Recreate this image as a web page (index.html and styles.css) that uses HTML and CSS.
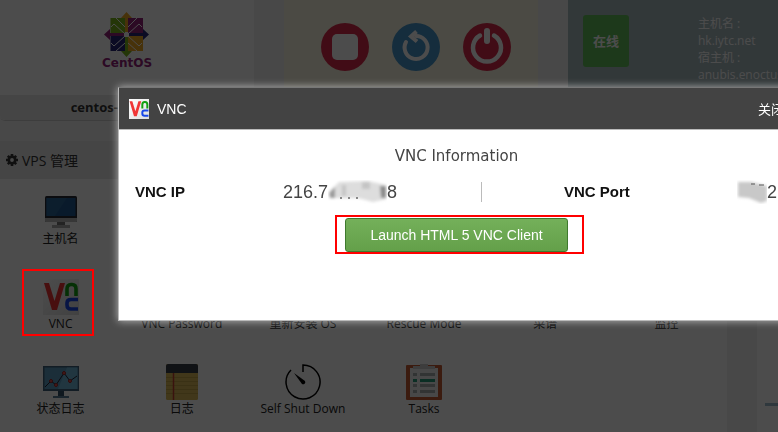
FILE: index.html
```html
<!DOCTYPE html>
<html lang="zh-CN">
<head>
    <meta charset="UTF-8">
    <meta name="viewport" content="width=device-width, initial-scale=1.0">
    <title>VNC</title>
    <link rel="stylesheet" href="styles.css">
</head>
<body>

    <!-- Shared VNC logo -->
    <svg class="symbols" aria-hidden="true">
        <defs>
            <linearGradient id="paper" x1="0" y1="0" x2="1" y2="1">
                <stop offset="0" stop-color="#fff"/>
                <stop offset="1" stop-color="#dcdcdc"/>
            </linearGradient>
        </defs>
        <symbol id="vncLogo" viewBox="0 0 36 36">
            <rect width="36" height="36" fill="url(#paper)"/>
            <path d="M1 4H6L11.500 22L17 4H22L14 31H9z" fill="#f03535"/>
            <path d="M24 17V10Q24 5.500 28 5.500H29Q33 5.500 33 10V17" fill="none" stroke="#12a012" stroke-width="3.600"/>
            <path d="M35 20.500H28Q24 20.500 24 24V26Q24 30 28 30H35" fill="none" stroke="#1848e8" stroke-width="3.600"/>
        </symbol>
    </svg>

    <div class="page">
        <div class="top-row">
            <div class="card os-card">
                <div class="os-logo">
                    <svg width="60" height="58" viewBox="-5 0 60 58" role="img" aria-label="CentOS">
                        <path d="M8.500 6H23V22H8.500z" fill="#79b51c"/>
                        <path d="M26 6H41V22H26z" fill="#932279"/>
                        <path d="M8.500 24H23V39H8.500z" fill="#262577"/>
                        <path d="M26 24H41V39H26z" fill="#efa724"/>
                        <!-- folded squares: white outlines towards the middle -->
                        <path d="M9 15L12 12L23 22M14 6L23 15M40 15L37 12L26 22M35 6L26 15M9 31L12 34L23 24M14 39L23 31M40 31L37 34L26 24M35 39L26 31" fill="none" stroke="#fff" stroke-width="1"/>
                        <path d="M24.500 0L30 6H26V20H23V6H19z" fill="#efa724"/>
                        <path d="M47 22.500L41 17V21H27V24H41V28z" fill="#262577"/>
                        <path d="M24.500 45L30 39H26V25H23V39H19z" fill="#79b51c"/>
                        <path d="M2 22.500L8 17V21H22V24H8V28z" fill="#932279"/>
                        <circle cx="24.500" cy="22.500" r="2.500" fill="#fff"/>
                        <text x="25" y="55" class="os-word" text-anchor="middle">CentOS</text>
                    </svg>
                </div>
                <div class="os-name">centos-6.5-x86_64</div>
            </div>

            <div class="card power-card">
                <button type="button" aria-label="Stop">
                    <svg width="48" height="48" viewBox="0 0 48 48"><circle cx="24" cy="24" r="24" fill="#d92b4b"/><rect x="11" y="11" width="26" height="26" rx="5" fill="#fff"/></svg>
                </button>
                <button type="button" aria-label="Restart">
                    <svg width="48" height="48" viewBox="0 0 48 48"><circle cx="24" cy="24" r="24" fill="#4697cc"/><path d="M14 19A11.500 11.500 0 1 0 24 13" fill="none" stroke="#fff" stroke-width="4" stroke-linecap="round"/><path d="M24.500 8.500L19 13.500L25 18.500" fill="none" stroke="#fff" stroke-width="4"/></svg>
                </button>
                <button type="button" aria-label="Power">
                    <svg width="48" height="48" viewBox="0 0 48 48"><circle cx="24" cy="24" r="24" fill="#d92b4b"/><path d="M17 12.500A14 14 0 1 0 31 12.500" fill="none" stroke="#fff" stroke-width="4.500" stroke-linecap="round"/><path d="M24 8V18" stroke="#fff" stroke-width="6" stroke-linecap="round"/></svg>
                </button>
            </div>

            <div class="card status-card">
                <div class="status">在线</div>
                <div class="host-info">主机名 :<br>hk.iytc.net<br>宿主机 :<br>anubis.enoctus</div>
            </div>
        </div>

        <div class="bottom-row">
            <div class="panel">
                <div class="panel-title">
                    <svg width="12" height="12" viewBox="0 0 12 12"><path d="M6 0V12M0 6H12M1.800 1.800L10.200 10.200M10.200 1.800L1.800 10.200" stroke="#333" stroke-width="2.600"/><circle cx="6" cy="6" r="3.200" fill="#f0f0f0" stroke="#333" stroke-width="2.600"/></svg>
                    VPS 管理
                </div>
                <div class="tools">
                    <a href="#" class="tool">
                        <svg class="icon" viewBox="0 0 36 36">
                            <rect x="2" y="2" width="32" height="26" rx="1.500" fill="#252a33"/>
                            <path d="M3.500 4H32.500V22H3.500z" fill="#205890"/>
                            <path d="M3.500 4H24L12 22H3.500z" fill="#286598"/>
                            <path d="M2 24H34V27Q34 28 33 28H3Q2 28 2 27z" fill="#b8b8b8"/>
                            <path d="M14 28H22V31H14z" fill="#777"/>
                            <path d="M9 31H27V34H9z" fill="#aaa"/>
                        </svg>
                        主机名
                    </a>
                </div>
                <div class="tools">
                    <a href="#" class="tool"><svg class="icon"><use href="#vncLogo"/></svg>VNC</a>
                    <a href="#" class="tool"><span class="icon"></span>VNC Password</a>
                    <a href="#" class="tool"><span class="icon"></span>重新安装 OS</a>
                    <a href="#" class="tool"><span class="icon"></span>Rescue Mode</a>
                    <a href="#" class="tool"><span class="icon"></span>菜谱</a>
                    <a href="#" class="tool"><span class="icon"></span>监控</a>
                </div>
                <div class="tools">
                    <a href="#" class="tool">
                        <svg class="icon" viewBox="0 0 36 36">
                            <path d="M0 2H36V27H0z" fill="#3d5f78"/>
                            <path d="M1.500 3.500H34.500V25H1.500z" fill="#5a9cc0"/>
                            <path d="M24 3.500H34.500V25H15z" fill="#70b4d6"/>
                            <path d="M15 27H21V32H15z" fill="#34516a"/>
                            <path d="M10 32H26V34H10z" fill="#577c98"/>
                            <path d="M2 23L8 17L13 21L21 9L27 17L34 12" fill="none" stroke="#223" stroke-width="1"/>
                            <g fill="#e86060" stroke="#a02020" stroke-width="1"><circle cx="8" cy="17" r="1.500"/><circle cx="13" cy="21" r="1.500"/><circle cx="21" cy="9" r="1.500"/><circle cx="27" cy="17" r="1.500"/></g>
                        </svg>
                        状态日志
                    </a>
                    <a href="#" class="tool">
                        <svg class="icon" viewBox="0 0 36 36">
                            <rect x="2" y="0" width="32" height="36" rx="1.500" fill="#d9b957"/>
                            <path d="M2 9V2Q2 0 4 0H32Q34 0 34 2V9z" fill="#383d48"/>
                            <path d="M2 13.500H34M2 17.500H34M2 21.500H34M2 25.500H34M2 29.500H34" stroke="#c4a548"/>
                            <path d="M9.500 9V36" stroke="#c43c30" stroke-width="1.500"/>
                        </svg>
                        日志
                    </a>
                    <a href="#" class="tool">
                        <svg class="icon" viewBox="0 0 36 36">
                            <path d="M18 8V1A17 17 0 1 1 6 6" fill="none" stroke="#000" stroke-width="1.500"/>
                            <path d="M9 9L20 17A2.200 2.200 0 0 1 17 20z" fill="#000"/>
                        </svg>
                        Self Shut Down
                    </a>
                    <a href="#" class="tool">
                        <svg class="icon" viewBox="0 0 36 36">
                            <rect y="1" width="36" height="35" rx="1" fill="#c75a32"/>
                            <path d="M4 4H32V33H4z" fill="#f2f2f2"/>
                            <path d="M7 2H14V0H22V2H29V5H7z" fill="#ccc"/>
                            <path d="M7 10.500H11M14 10.500H29M7 21.500H11M14 21.500H29M7 27.500H11M14 27.500H29" stroke="#a8b0b0" stroke-width="3"/>
                            <path d="M7 16.500H11M14 16.500H29" stroke="#279b78" stroke-width="3"/>
                        </svg>
                        Tasks
                    </a>
                </div>
            </div>
            <div class="panel side-panel">
                <div class="usage-bar"></div>
            </div>
        </div>
    </div>

    <div class="overlay"></div>

    <div class="modal" role="dialog" aria-label="VNC">
        <div class="modal-header">
            <svg width="20" height="20"><use href="#vncLogo"/></svg>
            <span>VNC</span>
            <button type="button" class="close">关闭</button>
        </div>
        <div class="modal-body">
            <h2>VNC Information</h2>
            <dl class="vnc-info">
                <dt>VNC IP</dt>
                <dd>216.7<svg class="smudge" width="59" height="24" viewBox="0 0 59 24">
                    <filter id="soft" x="-20%" y="-20%" width="140%" height="140%"><feGaussianBlur stdDeviation="1.500"/></filter>
                    <g filter="url(#soft)">
                        <path d="M2 11L11 2L40 1L58 5V19L45 22L30 18L2 18z" fill="#ddd"/>
                        <path d="M1 13L7 7V18H2z" fill="#999"/>
                        <path d="M52 6H58V18H53z" fill="#888"/>
                        <path d="M34 2H42V9H34zM14 5H18V16H14z" fill="#c4c4c4"/>
                    </g>
                    <path d="M12 18H14M20 18H22M28 18H30" stroke="#666" stroke-width="1.500"/>
                </svg>8</dd>
                <dt class="port-label">VNC Port</dt>
                <dd class="port"><svg class="smudge" width="30" height="24" viewBox="0 0 30 24">
                    <path d="M1 2H14L30 6V21L24 23L12 18L1 17z" fill="#c8c8c8" filter="url(#soft)"/>
                    <path d="M14 4H18M22 5H27" stroke="#555" stroke-width="1"/>
                </svg>2</dd>
            </dl>
            <button type="button" class="launch">Launch HTML 5 VNC Client</button>
        </div>
    </div>

    <div class="mark mark-vnc"></div>
    <div class="mark mark-launch"></div>

</body>
</html>
```
FILE: styles.css
```css
* {
    box-sizing: border-box;
}
body {
    margin: 0;
    font-family: 'Open Sans', 'Noto Sans CJK SC', sans-serif;
    font-size: 12px;
    color: #333;
    background-color: #f2f2f2;
    overflow: hidden;
}
button {
    padding: 0;
    border: none;
    background: none;
    font-family: inherit;
    cursor: pointer;
}
.symbols {
    position: absolute;
    width: 0;
    height: 0;
}

/* The page is a little wider than the window */
.page {
    width: calc(100% + 44px);
}
.top-row {
    display: grid;
    grid-template-columns: repeat(3, 1fr);
    gap: 30px;
    height: 121px;
    margin-bottom: 20px;
}
.card {
    background-color: #fff;
    border-radius: 0 0 5px 5px;
}
.os-card {
    display: flex;
    flex-direction: column;
    overflow: hidden;
    border-bottom: 1px solid #ccc;
}
.os-logo {
    flex: 1;
    padding-top: 12px;
    text-align: center;
}
.os-word {
    font-family: 'DejaVu Sans', sans-serif;
    font-size: 12px;
    font-weight: bold;
    fill: #932279;
}
.os-name {
    background-color: #e8e8e8;
    font-size: 13px;
    font-weight: bold;
    line-height: 25px;
    text-align: center;
}
.power-card {
    display: flex;
    justify-content: center;
    gap: 23px;
    padding: 23px 0 0 10px;
    background-color: #fcf8e3;
}
.power-card button {
    height: 48px;
}
.status-card {
    display: grid;
    grid-template-columns: 46px 1fr;
    gap: 69px;
    align-items: start;
    padding: 15px;
    color: #fff;
    background-color: #a9bbc0;
}
.status {
    border-radius: 3px;
    background-color: #62c05a;
    font-size: 13px;
    font-weight: bold;
    line-height: 52px;
    text-align: center;
}
.host-info {
    line-height: 17px;
    color: #fff;
}

.bottom-row {
    display: grid;
    grid-template-columns: 727px 1fr;
    gap: 30px;
}
.panel {
    min-height: 291px;
    background-color: #fff;
}
.panel-title {
    display: flex;
    align-items: center;
    gap: 4px;
    height: 38px;
    padding-left: 6px;
    background-color: #e6e6e6;
    font-size: 14px;
}
.tools {
    display: grid;
    grid-template-columns: repeat(6, 1fr);
    height: 85px;
    padding-top: 15px;
}
.tool {
    display: flex;
    flex-direction: column;
    align-items: center;
    color: #222;
    line-height: 18px;
    text-decoration: none;
}
.icon {
    width: 36px;
    height: 36px;
}
.side-panel {
    padding: 262px 0 0 8px;
}
.usage-bar {
    height: 3px;
    background-color: #9dbccb;
}

.overlay {
    position: fixed;
    inset: 0;
    background-color: rgba(0, 0, 0, 0.7);
}

/* VNC dialog */
.modal {
    position: fixed;
    top: 87px;
    left: 118px;
    right: -17px;
    border: 1px solid #bbb;
    border-top-color: #777;
    background-color: #fff;
    font-family: 'Liberation Sans', 'Noto Sans CJK SC', sans-serif;
    box-shadow: 0 0 8px rgba(255, 255, 255, 0.6);
}
.modal-header {
    display: flex;
    align-items: center;
    gap: 8px;
    height: 42px;
    padding: 0 10px;
    border-bottom: 1px solid #bbb;
    color: #fff;
    background-color: #434343;
    font-size: 14px;
}
.close {
    margin-left: auto;
    color: #fff;
    font-size: 13px;
}
.modal-body {
    min-height: 190px;
    padding: 16px;
    text-align: center;
}
.modal-body h2 {
    margin: 0 0 16px;
    color: #444;
    font-family: 'DejaVu Sans', sans-serif;
    font-size: 15px;
    font-weight: normal;
    line-height: 20px;
}
.vnc-info {
    display: grid;
    grid-template-columns: 130px 216px 174px 1fr;
    margin: 0 0 16px;
    line-height: 20px;
}
.vnc-info dt {
    color: #111;
    font-size: 15px;
    font-weight: bold;
    text-align: left;
}
.vnc-info .port-label {
    padding-left: 82px;
    border-left: 1px solid #bbb;
}
.vnc-info dd {
    display: flex;
    align-items: center;
    height: 20px;
    margin: 0;
    padding-left: 18px;
    color: #444;
    font-size: 18px;
}
.vnc-info .port {
    padding-left: 82px;
}
.smudge {
    flex: none;
}
.launch {
    height: 34px;
    padding: 0 24px;
    border: 1px solid #3f7a2e;
    border-radius: 3px;
    color: #fff;
    background: linear-gradient(#74b05a, #64a04a);
    font-size: 14px;
}

/* Red highlight boxes */
.mark {
    position: fixed;
    border: 2px solid #f00;
    pointer-events: none;
}
.mark-vnc {
    top: 269px;
    left: 22px;
    width: 72px;
    height: 67px;
}
.mark-launch {
    top: 215px;
    left: 335px;
    width: 249px;
    height: 39px;
}
```
